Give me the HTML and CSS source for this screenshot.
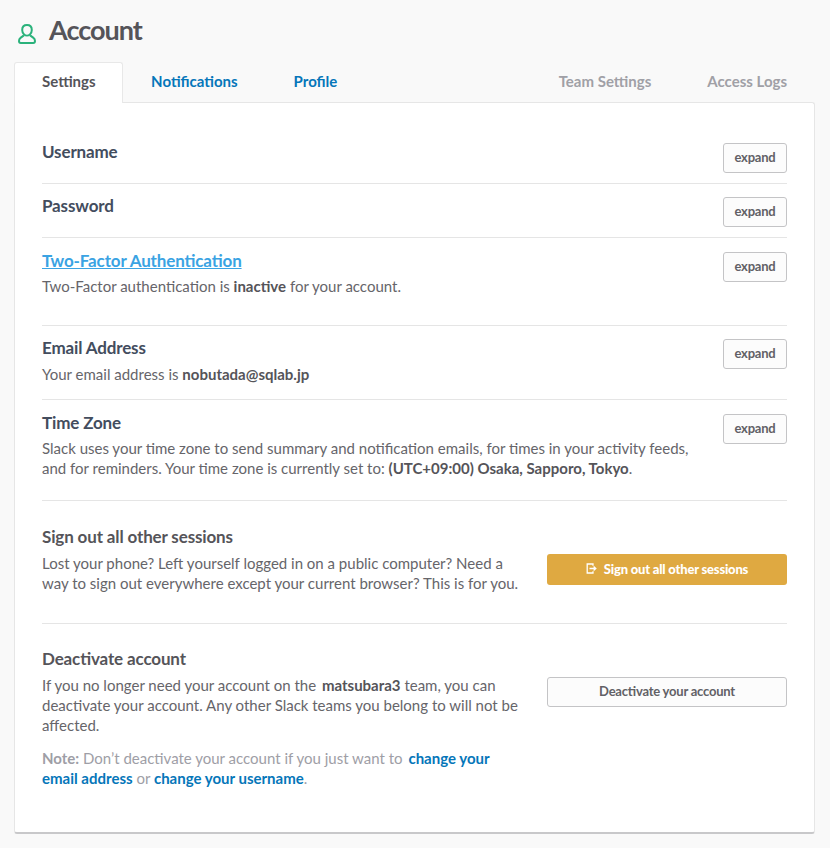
FILE: index.html
```html
<!DOCTYPE html>
<html lang="en">
<head>
<meta charset="utf-8">
<title>Account</title>
<link rel="stylesheet" href="styles.css">
</head>
<body>
<header class="page-header">
  <svg class="user-icon" width="20" height="22" viewBox="0 0 20 22" fill="none" stroke="#2ab27b" stroke-width="2" stroke-linejoin="round">
    <path d="M7.300 11.700C6 10.700 5.200 9 5.200 6.900C5.200 3.800 7 2 10 2S14.800 3.800 14.800 6.900C14.800 9 14 10.700 12.700 11.700C11.300 12.800 8.700 12.800 7.300 11.700Z"/>
    <path d="M6.900 12.400L3.500 14.900C2.500 15.600 2 16.700 2 17.900C2 19.200 2.600 19.900 3.800 19.900H16.200C17.400 19.900 18 19.200 18 17.900C18 16.700 17.500 15.600 16.500 14.900L13.100 12.400"/>
  </svg>
  <h1>Account</h1>
</header>
<nav class="tabs">
  <a class="tab selected">Settings</a>
  <a class="tab notifications">Notifications</a>
  <a class="tab">Profile</a>
  <a class="tab secondary first">Team Settings</a>
  <a class="tab secondary">Access Logs</a>
</nav>
<main class="card">
  <section class="row username">
    <h2>Username</h2>
    <button class="btn expand">expand</button>
  </section>
  <section class="row password">
    <h2>Password</h2>
    <button class="btn expand">expand</button>
  </section>
  <section class="row two-factor">
    <div>
      <h2><a>Two-Factor Authentication</a></h2>
      <p>Two-Factor authentication is <strong>inactive</strong> for your account.</p>
    </div>
    <button class="btn expand">expand</button>
  </section>
  <section class="row email">
    <div>
      <h2>Email Address</h2>
      <p>Your email address is <strong>nobutada@sqlab.jp</strong></p>
    </div>
    <button class="btn expand">expand</button>
  </section>
  <section class="row timezone">
    <div>
      <h2>Time Zone</h2>
      <p>Slack uses your time zone to send summary and notification emails, for times in your activity feeds,<br>and for reminders. Your time zone is currently set to: <strong>(UTC+09:00) Osaka, Sapporo, Tokyo</strong>.</p>
    </div>
    <button class="btn expand">expand</button>
  </section>
  <section class="row wide sessions">
    <div>
      <h2>Sign out all other sessions</h2>
      <p>Lost your phone? Left yourself logged in on a public computer? Need a<br>way to sign out everywhere except your current browser? This is for you.</p>
    </div>
    <button class="btn warning">
      <svg width="11" height="11" viewBox="0 0 11 11" fill="none" stroke="#fff" stroke-width="1.3">
        <path d="M7 2.800V1H1.200V10H7V8.200M3.500 5.500H9.500M7.600 3.600L9.800 5.500L7.600 7.400"/>
      </svg>
      <span>Sign out all other sessions</span>
    </button>
  </section>
  <section class="row wide deactivate">
    <div>
      <h2>Deactivate account</h2>
      <p>If you no longer need your account on the <strong class="spaced">matsubara3</strong> team, you can<br>deactivate your account. Any other Slack teams you belong to will not be<br>affected.</p>
      <p class="note"><strong>Note:</strong> Don’t deactivate your account if you just want to <a class="spaced">change your</a><br><a>email address</a> or <a>change your username</a>.</p>
    </div>
    <button class="btn">Deactivate your account</button>
  </section>
</main>
</body>
</html>
```
FILE: styles.css
```css
* { box-sizing: border-box; }

body {
  margin: 0;
  padding: 0 15px 0 14px;
  background: #f9f9f9;
  color: #66656a;
  font: 15px/20px Lato, sans-serif;
}
strong { color: #555459; }

.page-header { display: flex; height: 62px; padding: 0 0 0 3px; }
.user-icon { margin-top: 23px; }
h1 {
  margin: 14px 0 0 12px;
  color: #555459;
  font-size: 27px;
  line-height: 32px;
  font-weight: 700;
  letter-spacing: -1px;
}

.tabs { display: flex; height: 41px; margin-bottom: -1px; }
.tab {
  padding: 8px 27px;
  border: 1px solid transparent;
  color: #0576b9;
  font-weight: 700;
}
.tab.selected {
  padding-right: 26.500px;
  border-color: #e8e8e8;
  border-bottom: 0;
  border-radius: 3px 3px 0 0;
  background: #fff;
  color: #555459;
  position: relative;
}
.tab.secondary { color: #a0a0a6; }
.tab.first { margin-left: auto; }

.card {
  height: 732px;
  padding: 26px 27px 0;
  background: #fff;
  border: 1px solid #e6e6e6;
  border-bottom: 2px solid #c8c8ca;
  border-radius: 0 3px 3px 3px;
}

.row {
  display: flex;
  justify-content: space-between;
  align-items: flex-start;
  padding-top: 13px;
  border-bottom: 1px solid #e5e5e5;
}
.username { height: 55px; padding-top: 14px; }
.password { height: 54px; }
.two-factor { height: 88px; padding-top: 14px; }
.email { height: 74px; }
.timezone { height: 101px; padding-top: 14px; }
.sessions { height: 123px; padding-top: 27px; }
.deactivate { padding-top: 26px; border: 0; }

h2 {
  margin: -2px 0 5px;
  color: #434d5e;
  font-size: 17px;
  line-height: 22px;
  font-weight: 700;
  font-feature-settings: "liga" 1;
  letter-spacing: -0.14px;
}
.two-factor h2, .timezone h2 { margin-bottom: 4px; }
.wide h2 { color: #555459; }
h2 a { color: #3aa3e3; text-decoration: underline; }
p { margin: 0; white-space: nowrap; }
.note { margin-top: 13px; color: #9e9ea6; }
.note strong { color: inherit; }
.note a { color: #0576b9; font-weight: 700; }
.spaced { margin-left: 2px; }

.btn {
  display: flex;
  align-items: center;
  justify-content: center;
  width: 240px;
  height: 30px;
  padding: 0 0 2px;
  border: 1px solid #c4c4c6;
  border-radius: 3px;
  background: #fcfcfc;
  color: #626166;
  font: 700 13px/18px Lato, sans-serif;
  font-feature-settings: "liga" 1;
  letter-spacing: -0.22px;
}
.btn.expand { width: 64px; }
.wide .btn { margin-top: 27px; }
.wide .btn.warning {
  gap: 7px;
  height: 31px;
  margin-top: 26px;
  border: 0;
  background: #dfa941;
  color: #fff;
  font-weight: 900;
  letter-spacing: -0.2px;
}
```
